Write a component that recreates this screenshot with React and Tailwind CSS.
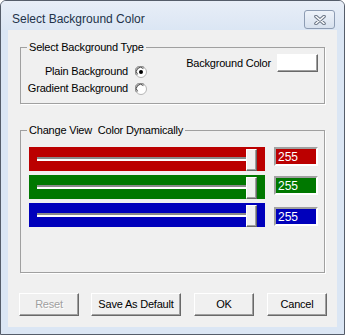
import React from 'react'

const raised =
  'bg-[#f0f0f0] border border-t-white border-l-white border-r-[#696969] border-b-[#696969] shadow-[inset_-1px_-1px_0_#a0a0a0]'

function Radio({ checked }) {
  return (
    <svg width="12" height="12" viewBox="0 0 12 12" className="shrink-0">
      <circle cx="6" cy="6" r="5.5" fill="#fff" stroke="#b4b4b4" />
      <path d="M1.6 9.2 A5 5 0 0 1 9.2 1.6" fill="none" stroke="#808080" strokeWidth="1" />
      <path d="M2.6 8.4 A4 4 0 0 1 8.4 2.6" fill="none" stroke="#404040" strokeWidth="1" />
      {checked && <circle cx="6" cy="6" r="2" fill="#000" />}
    </svg>
  )
}

function Group({ label, className, children }) {
  return (
    <div className={'relative mx-[12px] border border-[#a0a0a0] shadow-[1px_1px_0_#fff] ' + className}>
      <span className="absolute -top-[8px] left-[6px] bg-[#f0f0f0] px-[2px] leading-[14px] whitespace-pre">
        {label}
      </span>
      {children}
    </div>
  )
}

function SliderRow({ bar, box, boxOffset }) {
  return (
    <div className="flex items-start">
      <div className={'relative flex h-[24px] w-[236px] items-center px-[8px] ' + bar}>
        <div className="relative h-[4px] flex-1 border-t-2 border-t-[#8a8a8a] bg-white">
          <div
            className={
              'absolute right-0 top-1/2 h-[22px] w-[11px] -translate-y-1/2 ' + raised
            }
          />
        </div>
      </div>
      <div
        className={
          'ml-[9px] flex h-[19px] w-[44px] items-center border-2 border-t-[#a0a0a0] border-l-[#a0a0a0] border-r-white border-b-white pl-[2px] text-[12px] tracking-normal text-white ' +
          box +
          ' ' +
          boxOffset
        }
      >
        255
      </div>
    </div>
  )
}

function Button({ children, width, disabled }) {
  return (
    <button
      className={
        'flex h-[23px] items-center justify-center text-[11px] ' +
        width +
        ' ' +
        raised +
        (disabled ? ' text-[#a0a0a0] [text-shadow:1px_1px_0_#fff]' : ' text-black')
      }
    >
      {children}
    </button>
  )
}

export default function App() {
  return (
    <div className="flex h-[335px] w-[345px] flex-col overflow-hidden rounded-t-[6px] border border-[#555d6a] bg-[#dbe6f4] font-['Liberation_Sans',Arial,sans-serif]">
      {/* title bar */}
      <div className="flex h-[29px] items-start bg-gradient-to-b from-[#e8eef7] to-[#dbe6f4] pl-[11px] pr-[9px] pt-[9px]">
        <span className="text-[12px] leading-[18px] text-[#22334a]">Select Background Color</span>
        <div className="ml-auto flex h-[19px] w-[31px] items-center justify-center rounded-[3px] border border-[#8d9cb3] bg-gradient-to-b from-[#eef3fa] to-[#d7e1ee]">
          <svg width="12" height="10" viewBox="0 0 12 10">
            <path d="M2 1.5 L10 8.5 M10 1.5 L2 8.5" stroke="#6b7686" strokeWidth="3.6" strokeLinecap="round" />
            <path d="M2 1.5 L10 8.5 M10 1.5 L2 8.5" stroke="#fbfcfd" strokeWidth="1.6" strokeLinecap="round" />
          </svg>
        </div>
      </div>

      {/* client area */}
      <div className="mx-[7px] mb-[7px] flex flex-1 flex-col bg-[#f0f0f0] text-[11px] tracking-[-0.2px] text-black">
        <Group label="Select Background Type" className="mt-[17px] h-[57px]">
          <div className="flex items-start">
            <div className="ml-[8px] mt-[15px] flex w-[118px] flex-col whitespace-nowrap">
              <div className="flex h-[17px] items-center justify-end gap-[7px]">
                <span>Plain Background</span>
                <Radio checked />
              </div>
              <div className="flex h-[17px] items-center justify-end gap-[7px]">
                <span>Gradient Background</span>
                <Radio />
              </div>
            </div>
            <div className="ml-auto mr-[6px] mt-[6px] flex items-center gap-[6px] whitespace-nowrap">
              <span>Background Color</span>
              <div className={'h-[18px] w-[41px] border border-t-white border-l-white border-r-[#696969] border-b-[#696969] bg-white shadow-[inset_-1px_-1px_0_#a0a0a0]'} />
            </div>
          </div>
        </Group>

        <Group label="Change View  Color Dynamically" className="mt-[26px] h-[143px]">
          <div className="ml-[8px] mt-[16px] flex flex-col gap-[4px]">
            <SliderRow bar="bg-[#bb0000]" box="bg-[#bb0000]" boxOffset="mt-0" />
            <SliderRow bar="bg-[#007800]" box="bg-[#007800]" boxOffset="mt-[1px]" />
            <SliderRow bar="bg-[#0000bb]" box="bg-[#0000bb]" boxOffset="mt-[4px]" />
          </div>
        </Group>

        <div className="ml-[11px] mt-[20px] flex gap-[12px]">
          <Button width="w-[60px]" disabled>
            Reset
          </Button>
          <Button width="w-[90px]">Save As Default</Button>
          <div className="ml-[1px]">
            <Button width="w-[60px]">OK</Button>
          </div>
          <div className="ml-[1px]">
            <Button width="w-[60px]">Cancel</Button>
          </div>
        </div>
      </div>
    </div>
  )
}
